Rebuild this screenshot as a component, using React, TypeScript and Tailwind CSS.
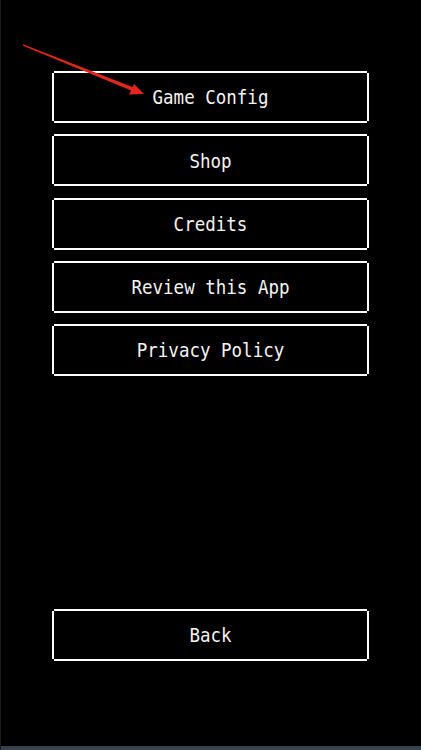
const items = ["Game Config", "Shop", "Credits", "Review this App", "Privacy Policy"];

function PixelButton({ label }: { label: string }) {
  // pixel-style frame: horizontal edges inset by 2px so the corners look notched
  return (
    <div className="mx-[2px] border-y-2 border-white">
      <div className="-mx-[2px] flex h-[48px] items-center justify-center border-x-2 border-white">
        <span
          className="translate-y-[1px] scale-y-[1.15] text-[17.5px] leading-none text-[#f4f4f4]"
          style={{ fontFamily: '"DejaVu Sans Mono", "Liberation Mono", monospace' }}
        >
          {label}
        </span>
      </div>
    </div>
  );
}

export default function App() {
  return (
    <div className="relative flex h-[750px] w-full flex-col border-l border-[#1c1c1c] bg-black">
      <div className="flex flex-1 flex-col pl-[51px] pr-[52px] pt-[71px]">
        <div className="flex flex-col gap-[11.25px]">
          {items.map((it) => (
            <PixelButton key={it} label={it} />
          ))}
        </div>
        <div className="mt-auto mb-[85px]">
          <PixelButton label="Back" />
        </div>
      </div>
      <div className="h-[4px] bg-[#36434f]" />

      {/* red annotation arrow, thickening toward the head */}
      <svg className="pointer-events-none absolute left-0 top-0" width="421" height="120" viewBox="0 0 421 120">
        <polygon points="22,44.3 134,88 132.5,91.5 22,45.7" fill="#e0261e" />
        <polygon points="143,94 128,94.5 133,84" fill="#e0261e" />
      </svg>
    </div>
  );
}
